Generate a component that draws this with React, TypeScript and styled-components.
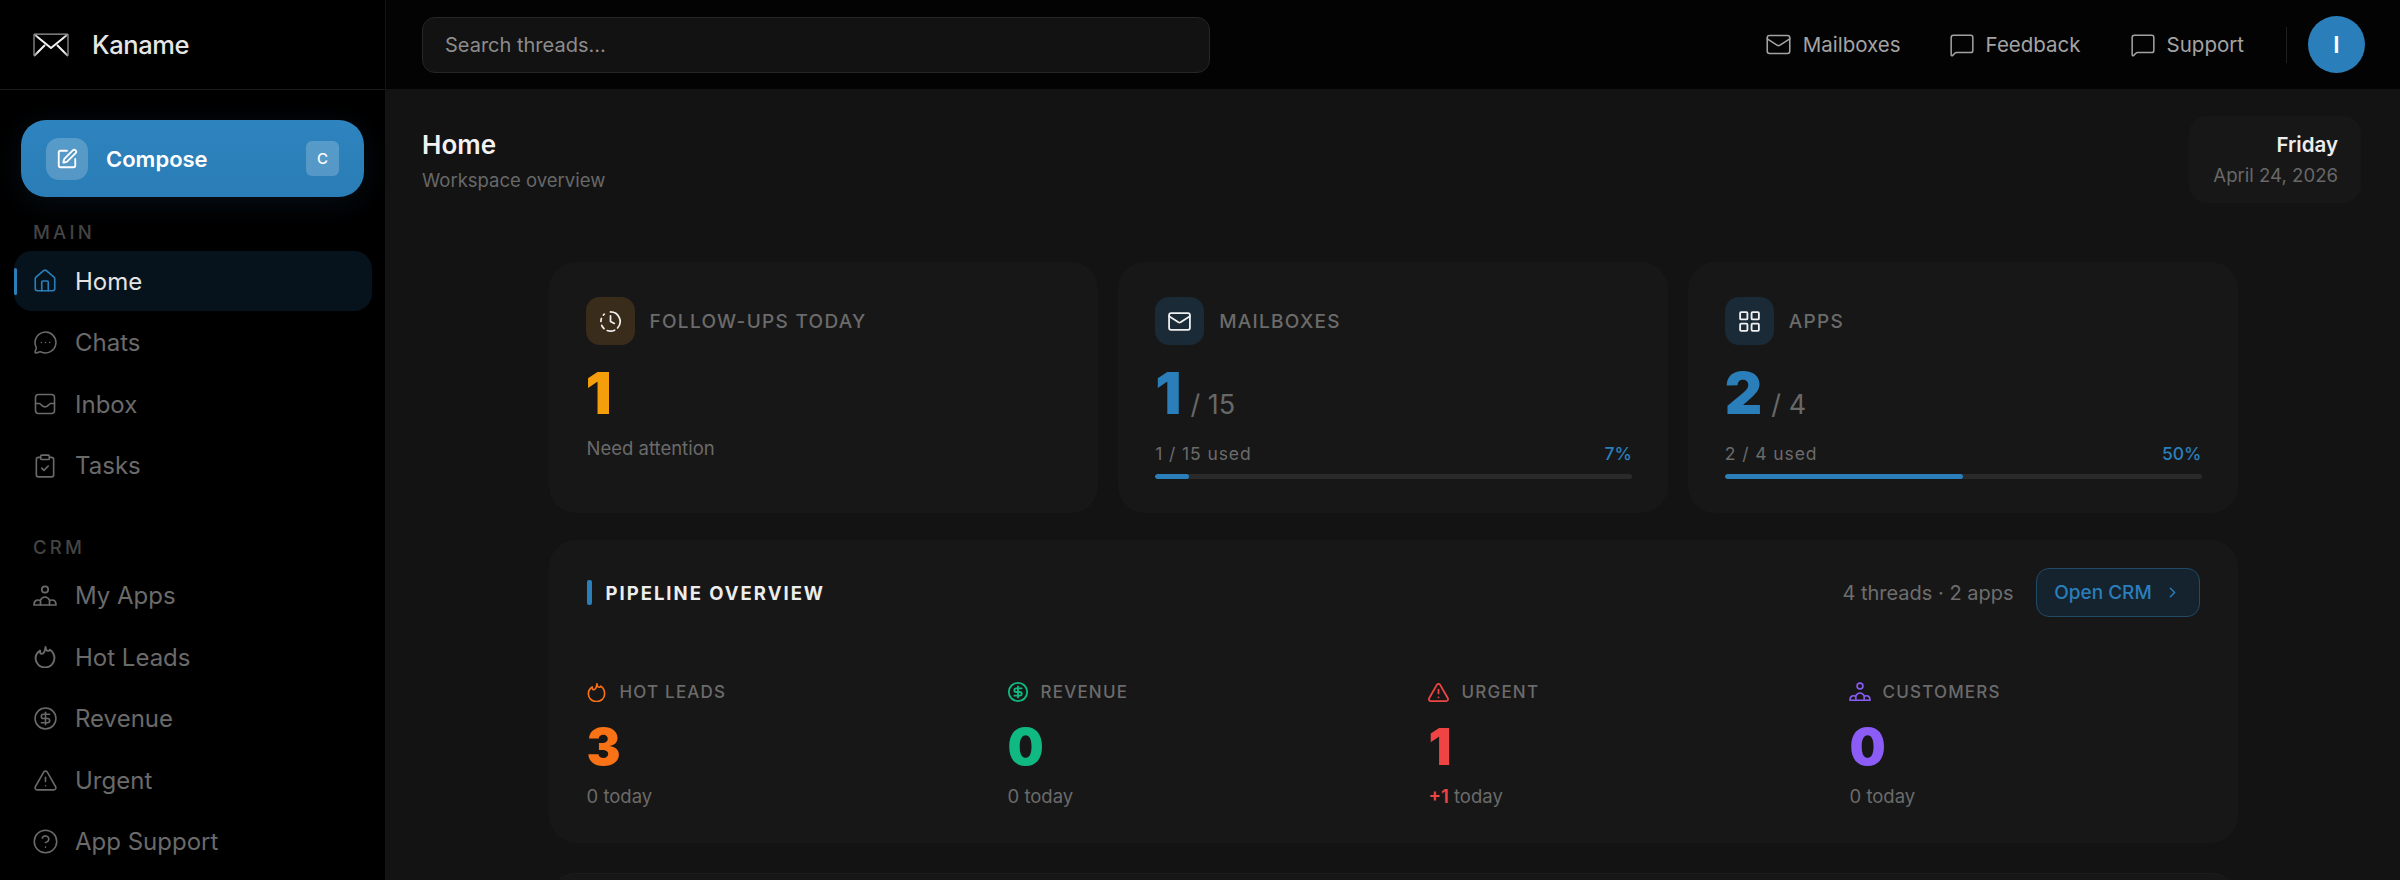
import React from "react";
import styled, { createGlobalStyle } from "styled-components";
import {
  ChevronRight,
  CircleDollarSign,
  CircleHelp,
  ClipboardCheck,
  ClockFading,
  House,
  LayoutGrid,
  Mail,
  MessageCircleMore,
  MessageSquare,
  SquarePen,
  TriangleAlert,
} from "lucide-react";

const BLUE = "#2a7fbb";

const GlobalStyle = createGlobalStyle`
  html, body {
    margin: 0;
    padding: 0;
    height: 100%;
    background: #131313;
    overflow: hidden;
  }
  body {
    font-family: Inter, "Noto Sans", sans-serif;
    -webkit-font-smoothing: antialiased;
  }
  * { box-sizing: border-box; }
`;

const Shell = styled.div`
  display: flex;
  width: 2400px;
  height: 880px;
  overflow: hidden;
`;

const Sidebar = styled.aside`
  width: 386px;
  flex-shrink: 0;
  height: 880px;
  background: #000;
  border-right: 1px solid #141414;
  display: flex;
  flex-direction: column;
`;

const Brand = styled.div`
  height: 90px;
  flex-shrink: 0;
  display: flex;
  align-items: center;
  gap: 23px;
  padding-left: 33px;
  border-bottom: 1px solid #1a1a1a;
  color: #e6e6e6;
  font-size: 25.5px;
  font-weight: 500;
  letter-spacing: -0.4px;
`;

const ComposeButton = styled.button`
  width: 343px;
  height: 77px;
  margin: 30px 0 0 21px;
  flex-shrink: 0;
  border: none;
  border-radius: 25px;
  background: linear-gradient(180deg, #2e84bf, #2a7db6);
  box-shadow: 0 6px 28px rgba(42, 127, 187, 0.12);
  color: #fff;
  display: flex;
  align-items: center;
  padding: 0 25px;
  font-family: inherit;
  font-size: 22px;
  font-weight: 600;
`;

const ComposeIcon = styled.span`
  width: 42px;
  height: 42px;
  border-radius: 13px;
  background: rgba(255, 255, 255, 0.2);
  display: flex;
  align-items: center;
  justify-content: center;
  margin-right: 18px;
`;

const Kbd = styled.span`
  margin-left: auto;
  width: 33px;
  height: 35px;
  border-radius: 6px;
  background: rgba(255, 255, 255, 0.2);
  display: flex;
  align-items: center;
  justify-content: center;
  font-size: 15px;
  font-weight: 500;
`;

const SectionLabel = styled.div<{ $top: number }>`
  margin: ${({ $top }) => $top}px 0 0 33px;
  height: 20px;
  line-height: 20px;
  flex-shrink: 0;
  color: #444;
  font-size: 18.5px;
  font-weight: 500;
  letter-spacing: 3.2px;
`;

const NavList = styled.nav<{ $top: number }>`
  display: flex;
  flex-direction: column;
  gap: 1.5px;
  margin: ${({ $top }) => $top}px 13px 0 14px;
`;

const NavItem = styled.a<{ $active?: boolean }>`
  position: relative;
  height: 60px;
  flex-shrink: 0;
  display: flex;
  align-items: center;
  gap: 18px;
  padding-left: 19px;
  border-radius: 18px;
  background: ${({ $active }) => ($active ? "#07131c" : "transparent")};
  color: ${({ $active }) => ($active ? "#e4e4e4" : "#6a6a6a")};
  font-size: 24px;
  font-weight: 400;

  &::before {
    content: "";
    display: ${({ $active }) => ($active ? "block" : "none")};
    position: absolute;
    left: 0;
    top: 17px;
    width: 3px;
    height: 27px;
    border-radius: 2px;
    background: ${BLUE};
  }
`;

const NavIcon = styled.span<{ $active?: boolean }>`
  width: 24px;
  display: flex;
  justify-content: center;
  color: ${({ $active }) => ($active ? BLUE : "#6a6a6a")};

  svg {
    flex-shrink: 0;
  }
`;

const Main = styled.main`
  flex: 1;
  min-width: 0;
  display: flex;
  flex-direction: column;
  background: #131313;
`;

const Topbar = styled.header`
  height: 89px;
  flex-shrink: 0;
  background: #030303;
  display: flex;
  align-items: center;
  padding: 0 35px 0 36px;
`;

const Search = styled.div`
  width: 788px;
  height: 56px;
  border-radius: 13px;
  background: #121212;
  border: 1px solid #262626;
  display: flex;
  align-items: center;
  padding-left: 22px;
  color: #8c8c8c;
  font-size: 20px;
`;

const TopLinks = styled.div`
  margin-left: auto;
  display: flex;
  align-items: center;
`;

const TopLink = styled.a<{ $gap: number }>`
  display: flex;
  align-items: center;
  gap: 11px;
  margin-right: ${({ $gap }) => $gap}px;
  color: #a3a3a3;
  font-size: 20.5px;

  svg {
    flex-shrink: 0;
  }
`;

const Divider = styled.span`
  width: 1px;
  height: 36px;
  background: #1e1e1e;
  margin-right: 21px;
`;

const Avatar = styled.span`
  width: 57px;
  height: 57px;
  border-radius: 50%;
  background: ${BLUE};
  color: #fff;
  display: flex;
  align-items: center;
  justify-content: center;
  font-size: 23px;
  font-weight: 600;
`;

const PageHeader = styled.div`
  height: 114px;
  flex-shrink: 0;
  display: flex;
  align-items: flex-start;
  justify-content: space-between;
  padding: 27px 39px 0 36px;
`;

const PageTitle = styled.h1`
  margin: 13px 0 0;
  color: #f2f2f2;
  font-size: 26px;
  line-height: 32px;
  font-weight: 600;
`;

const PageSub = styled.p`
  margin: 7px 0 0;
  color: #686868;
  font-size: 18.5px;
  line-height: 24px;
`;

const DateCard = styled.div`
  width: 172px;
  height: 87px;
  border-radius: 18px;
  background: #171717;
  text-align: right;
  padding: 16px 23px 0 0;
`;

const DateDay = styled.div`
  color: #ededed;
  font-size: 20.5px;
  line-height: 26px;
  font-weight: 600;
`;

const DateFull = styled.div`
  margin-top: 5px;
  color: #686868;
  font-size: 18.6px;
  line-height: 24px;
  white-space: nowrap;
`;

const Content = styled.div`
  width: 1689px;
  margin: 59px auto 0;
  display: flex;
  flex-direction: column;
`;

const StatGrid = styled.div`
  display: grid;
  grid-template-columns: repeat(3, 1fr);
  gap: 20px;
`;

const Card = styled.section`
  background: #171717;
  border-radius: 27px;
`;

const StatCard = styled(Card)`
  height: 251px;
  padding: 35px 36px 35px 37px;
`;

const StatHead = styled.div`
  display: flex;
  align-items: center;
  gap: 15px;
`;

const IconBox = styled.span<{ $bg: string }>`
  width: 49px;
  height: 48px;
  border-radius: 14px;
  background: ${({ $bg }) => $bg};
  color: #f0f0f0;
  display: flex;
  align-items: center;
  justify-content: center;
`;

const StatLabel = styled.span`
  color: #6b6b6b;
  font-size: 19px;
  font-weight: 500;
  letter-spacing: 1.3px;
`;

const BigRow = styled.div`
  display: flex;
  align-items: baseline;
  gap: 9px;
  margin-top: 18px;
  height: 60px;
  line-height: 60px;
`;

const BigNumber = styled.span<{ $color: string }>`
  color: ${({ $color }) => $color};
  font-size: 58px;
  font-weight: 900;
`;

const OfTotal = styled.span`
  color: #686868;
  font-size: 27px;
`;

const Caption = styled.div`
  margin-top: 13px;
  margin-left: 1px;
  color: #6b6b6b;
  font-size: 18.5px;
  line-height: 24px;
`;

const UsageRow = styled.div`
  display: flex;
  justify-content: space-between;
  margin-top: 19px;
  color: #6b6b6b;
  font-size: 17.5px;
  line-height: 24px;
  letter-spacing: 0.9px;
`;

const UsagePct = styled.span`
  color: ${BLUE};
  letter-spacing: 0;
  font-weight: 500;
`;

const Track = styled.div`
  margin-top: 8px;
  height: 5px;
  border-radius: 3px;
  background: #2a2a2a;
  overflow: hidden;
`;

const Fill = styled.div`
  height: 100%;
  border-radius: 3px;
  background: ${BLUE};
`;

const PipelineCard = styled(Card)`
  height: 303px;
  margin-top: 27px;
  padding: 28px 38px 0;
`;

const PipelineHead = styled.div`
  height: 49px;
  display: flex;
  align-items: center;
`;

const TitleBar = styled.span`
  width: 5px;
  height: 25px;
  border-radius: 2px;
  background: ${BLUE};
  margin-right: 14px;
`;

const PipelineTitle = styled.h2`
  margin: 0;
  color: #ededed;
  font-size: 18.5px;
  font-weight: 700;
  letter-spacing: 2px;
`;

const PipelineMeta = styled.span`
  margin-left: auto;
  color: #6e6e6e;
  font-size: 20px;
`;

const OpenButton = styled.a`
  width: 164px;
  height: 49px;
  margin-left: 22px;
  border-radius: 13px;
  border: 1px solid #204a66;
  background: #15232e;
  color: ${BLUE};
  display: flex;
  align-items: center;
  justify-content: center;
  gap: 12px;
  font-size: 19px;
  font-weight: 500;
`;

const PipelineGrid = styled.div`
  display: grid;
  grid-template-columns: repeat(4, 1fr);
  column-gap: 71px;
  margin-top: 64px;
`;

const MetricHead = styled.div`
  height: 22px;
  display: flex;
  align-items: center;
  gap: 13px;
  color: #6b6b6b;
  font-size: 17px;
  font-weight: 500;
  letter-spacing: 1.2px;
`;

const MetricIcon = styled.span<{ $color: string }>`
  width: 20px;
  display: flex;
  justify-content: center;
  color: ${({ $color }) => $color};

  svg {
    flex-shrink: 0;
  }
`;

const MetricNumber = styled.div<{ $color: string }>`
  margin-top: 13px;
  height: 62px;
  line-height: 62px;
  color: ${({ $color }) => $color};
  font-size: 51px;
  font-weight: 900;
`;

const MetricSub = styled.div`
  margin-top: 6px;
  color: #6b6b6b;
  font-size: 18.5px;
  line-height: 24px;
`;

const Plus = styled.span`
  color: #ef4444;
  font-weight: 600;
`;

const NextCard = styled(Card)`
  height: 200px;
  margin-top: 30px;
  border-top: 1px solid #1d1d1d;
`;

type IconProps = { size?: number };

// the logo has no match in the icon packages: an open envelope fading out at the sides
const LogoIcon = () => (
  <svg width="36" height="24" viewBox="0 0 36 24" fill="none">
    <defs>
      <linearGradient id="logo-fade" x1="0" y1="0" x2="1" y2="0">
        <stop offset="0" stopColor="#8a8a8a" />
        <stop offset="0.12" stopColor="#f2f2f2" />
        <stop offset="0.88" stopColor="#f2f2f2" />
        <stop offset="1" stopColor="#8a8a8a" />
      </linearGradient>
    </defs>
    <path d="M1 1.2h34M1 1.2v21M35 1.2v21" stroke="#9a9a9a" strokeWidth="1.2" />
    <path d="M2 2l16 13L34 2M1 23l11-11M35 23L24 12" stroke="url(#logo-fade)" strokeWidth="2" />
  </svg>
);

const InboxIcon = ({ size = 24 }: IconProps) => (
  <svg width={size} height={size} viewBox="0 0 24 24" fill="none" stroke="currentColor" strokeWidth="1.6" strokeLinecap="round" strokeLinejoin="round">
    <rect x="2.5" y="2.5" width="19" height="19" rx="3" />
    <path d="M2.5 11.5h3.8c.9 0 1.4.5 1.8 1.2.8 1.4 2.2 2.2 3.9 2.2s3.1-.8 3.9-2.2c.4-.7.9-1.2 1.8-1.2h3.8" />
  </svg>
);

const FlameIcon = ({ size = 22 }: IconProps) => (
  <svg width={size} height={size} viewBox="2 1 20 21" fill="none" stroke="currentColor" strokeWidth="1.8" strokeLinecap="round" strokeLinejoin="round">
    <path d="M12.5 2c.4 3 1.6 4 3 3.6.6-.2 1-.6 1.2-1.1C19.300 6.300 21 9.300 21 12.800c0 5-4 8.700-9 8.700s-9-3.700-9-8.700c0-3.300 1.800-5.800 4.300-7.400-.1 1.700.4 2.900 1.500 3.100C10.500 8.700 12 6.300 12.500 2z" />
  </svg>
);

const PeopleIcon = ({ size = 24 }: IconProps) => (
  <svg width={size} height={size} viewBox="0 0 24 24" fill="none" stroke="currentColor" strokeWidth="1.7" strokeLinecap="round" strokeLinejoin="round">
    <circle cx="12" cy="5.500" r="3.200" />
    <path d="M1 21h22c0-3-1.500-5-4-5-.8 0-1.500.2-2.200.6C15.600 14.200 14 13 12 13s-3.600 1.200-4.800 3.600C6.500 16.200 5.800 16 5 16c-2.500 0-4 2-4 5z" />
    <path d="M7.500 17v4M16.500 17v4" />
  </svg>
);

const mainNav = [
  { label: "Home", icon: <House size={26} strokeWidth={1.5} />, active: true },
  { label: "Chats", icon: <MessageCircleMore size={25} strokeWidth={1.5} /> },
  { label: "Inbox", icon: <InboxIcon /> },
  { label: "Tasks", icon: <ClipboardCheck size={26} strokeWidth={1.5} /> },
];

const crmNav = [
  { label: "My Apps", icon: <PeopleIcon /> },
  { label: "Hot Leads", icon: <FlameIcon /> },
  { label: "Revenue", icon: <CircleDollarSign size={25} strokeWidth={1.5} /> },
  { label: "Urgent", icon: <TriangleAlert size={25} strokeWidth={1.5} /> },
  { label: "App Support", icon: <CircleHelp size={27} strokeWidth={1.4} /> },
];

const metrics = [
  { label: "HOT LEADS", value: "3", color: "#f97316", icon: <FlameIcon size={19} /> },
  { label: "REVENUE", value: "0", color: "#10b981", icon: <CircleDollarSign size={22} strokeWidth={2} /> },
  { label: "URGENT", value: "1", color: "#ef4444", icon: <TriangleAlert size={23} strokeWidth={1.9} />, plus: true },
  { label: "CUSTOMERS", value: "0", color: "#8b5cf6", icon: <PeopleIcon size={22} /> },
];

const usageCards = [
  { label: "MAILBOXES", value: 1, total: 15, pct: 7, icon: <Mail size={25} strokeWidth={1.7} /> },
  { label: "APPS", value: 2, total: 4, pct: 50, icon: <LayoutGrid size={25} strokeWidth={1.8} /> },
];

export default function App() {
  return (
    <Shell>
      <GlobalStyle />
      <Sidebar>
        <Brand>
          <LogoIcon />
          <span>Kaname</span>
        </Brand>
        <ComposeButton>
          <ComposeIcon>
            <SquarePen size={22} strokeWidth={2} />
          </ComposeIcon>
          Compose
          <Kbd>C</Kbd>
        </ComposeButton>
        <SectionLabel $top={25}>MAIN</SectionLabel>
        <NavList $top={9}>
          {mainNav.map((item) => (
            <NavItem key={item.label} $active={item.active}>
              <NavIcon $active={item.active}>{item.icon}</NavIcon>
              {item.label}
            </NavItem>
          ))}
        </NavList>
        <SectionLabel $top={41}>CRM</SectionLabel>
        <NavList $top={9}>
          {crmNav.map((item) => (
            <NavItem key={item.label}>
              <NavIcon>{item.icon}</NavIcon>
              {item.label}
            </NavItem>
          ))}
        </NavList>
      </Sidebar>

      <Main>
        <Topbar>
          <Search>Search threads…</Search>
          <TopLinks>
            <TopLink $gap={48}>
              <Mail size={27} strokeWidth={1.4} />
              Mailboxes
            </TopLink>
            <TopLink $gap={49}>
              <MessageSquare size={26} strokeWidth={1.4} />
              Feedback
            </TopLink>
            <TopLink $gap={42}>
              <MessageSquare size={26} strokeWidth={1.4} />
              Support
            </TopLink>
            <Divider />
            <Avatar>I</Avatar>
          </TopLinks>
        </Topbar>

        <PageHeader>
          <div>
            <PageTitle>Home</PageTitle>
            <PageSub>Workspace overview</PageSub>
          </div>
          <DateCard>
            <DateDay>Friday</DateDay>
            <DateFull>April 24, 2026</DateFull>
          </DateCard>
        </PageHeader>

        <Content>
          <StatGrid>
            <StatCard>
              <StatHead>
                <IconBox $bg="#3a2c1a">
                  <ClockFading size={23} strokeWidth={1.8} />
                </IconBox>
                <StatLabel>FOLLOW-UPS TODAY</StatLabel>
              </StatHead>
              <BigRow>
                <BigNumber $color="#f59e0b">1</BigNumber>
              </BigRow>
              <Caption>Need attention</Caption>
            </StatCard>
            {usageCards.map((card) => (
              <StatCard key={card.label}>
                <StatHead>
                  <IconBox $bg="#1a2a36">{card.icon}</IconBox>
                  <StatLabel>{card.label}</StatLabel>
                </StatHead>
                <BigRow>
                  <BigNumber $color={BLUE}>{card.value}</BigNumber>
                  <OfTotal>/ {card.total}</OfTotal>
                </BigRow>
                <UsageRow>
                  <span>
                    {card.value} / {card.total} used
                  </span>
                  <UsagePct>{card.pct}%</UsagePct>
                </UsageRow>
                <Track>
                  <Fill style={{ width: `${card.pct}%` }} />
                </Track>
              </StatCard>
            ))}
          </StatGrid>

          <PipelineCard>
            <PipelineHead>
              <TitleBar />
              <PipelineTitle>PIPELINE OVERVIEW</PipelineTitle>
              <PipelineMeta>4 threads · 2 apps</PipelineMeta>
              <OpenButton>
                Open CRM
                <ChevronRight size={17} strokeWidth={2} />
              </OpenButton>
            </PipelineHead>
            <PipelineGrid>
              {metrics.map((metric) => (
                <div key={metric.label}>
                  <MetricHead>
                    <MetricIcon $color={metric.color}>{metric.icon}</MetricIcon>
                    {metric.label}
                  </MetricHead>
                  <MetricNumber $color={metric.color}>{metric.value}</MetricNumber>
                  <MetricSub>
                    {metric.plus ? <Plus>+1</Plus> : "0"} today
                  </MetricSub>
                </div>
              ))}
            </PipelineGrid>
          </PipelineCard>

          <NextCard />
        </Content>
      </Main>
    </Shell>
  );
}
